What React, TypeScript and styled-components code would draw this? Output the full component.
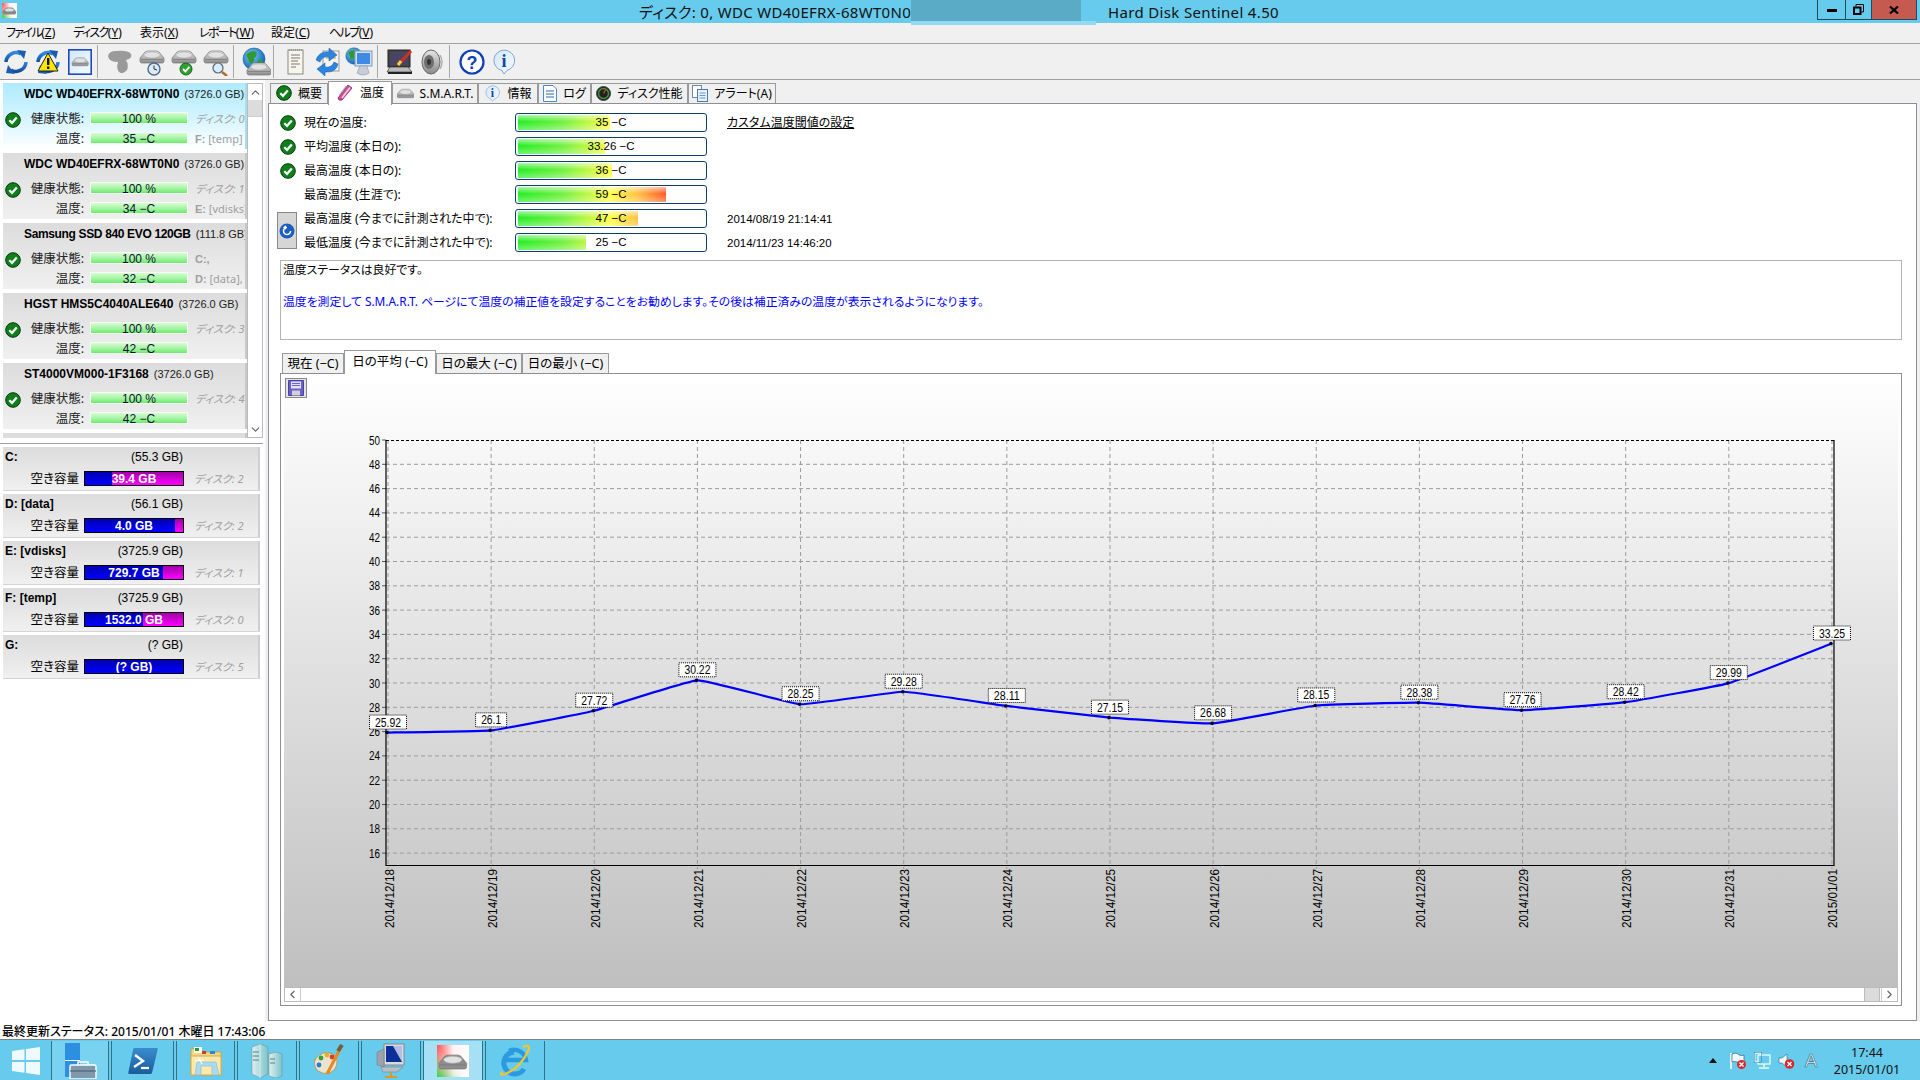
import React from "react";
import styled, { createGlobalStyle } from "styled-components";
import { ChevronUp, ChevronDown, ChevronLeft, ChevronRight } from "lucide-react";

const FONT = `"Noto Sans", "Noto Sans CJK JP", sans-serif`;

const Global = createGlobalStyle`
  html, body { margin: 0; padding: 0; background: #f0f0f0; overflow: hidden; }
  body { font-family: ${FONT}; font-size: 12px; color: #000; font-feature-settings: "palt"; }
  * { box-sizing: border-box; }
`;

const Page = styled.div`
  width: 1920px; height: 1080px; display: flex; flex-direction: column; background: #f0f0f0; position: relative; overflow: hidden;
`;
const HiddenDefs = styled.svg`position: absolute; width: 0; height: 0;`;

/* ---------- title ---------- */
const TitleBar = styled.div`
  height: 23px; flex: none; background: #66cbec; display: flex; align-items: flex-start; position: relative; overflow: visible;
`;
const AppIconBox = styled.div`margin: 3px 0 0 2px; width: 15px; height: 15px; display: flex;`;
const TitleA = styled.div`
  margin-left: 622px; width: 469px; line-height: 25px; font-size: 15px; letter-spacing: .3px; white-space: nowrap; color: #111;
`;
const TitleB = styled.div`
  line-height: 25px; font-size: 15px; letter-spacing: .35px; white-space: nowrap; color: #111;
`;
const BlurTop = styled.div`
  position: absolute; left: 911px; top: 0; width: 170px; height: 21px; background: #5aabc5; z-index: 3;
`;
const BlurBottom = styled.div`
  position: absolute; left: 911px; top: 21px; width: 185px; height: 4px; background: #93d9ef; z-index: 3;
`;
const WinBtns = styled.div`margin-left: auto; margin-right: 3px; display: flex; height: 20px;`;
const WinBtn = styled.div<{ $w: number; $close?: boolean }>`
  width: ${p => p.$w}px; height: 20px; border: 1px solid #1d4a5c; border-top: none; margin-left: -1px;
  display: flex; align-items: center; justify-content: center; background: ${p => (p.$close ? "#c45a50" : "#66cbec")};
`;

/* ---------- menu / toolbar ---------- */
const MenuBar = styled.div`
  height: 21px; flex: none; border-bottom: 1px solid #a0a0a0; display: flex; align-items: center; padding-left: 6px; background: #f0f0f0;
`;
const MenuItem = styled.div<{ $w: number }>`width: ${p => p.$w}px; font-size: 12px; white-space: nowrap; line-height: 20px;`;
const MenuLabel = styled.span<{ $tight?: boolean }>`letter-spacing: ${p => (p.$tight ? "-1.6px" : "0")};`;
const Toolbar = styled.div`
  height: 36px; flex: none; border-bottom: 1px solid #a0a0a0; display: flex; align-items: flex-start; padding-top: 1px; background: #f0f0f0;
`;
const ToolGroup = styled.div<{ $first?: boolean; $last?: boolean }>`
  height: 33px; display: flex; align-items: center; padding: 0 1px 0 ${p => (p.$first ? 0 : 6)}px;
  border-right: ${p => (p.$last ? "none" : "1px solid #a8a8a8")};
`;
const ToolSlot = styled.div`width: 32px; height: 30px; display: flex; align-items: center; justify-content: center;`;

/* ---------- main ---------- */
const Main = styled.div`flex: 1; display: flex; min-height: 0; background: #f0f0f0;`;
const LeftPanel = styled.div`
  width: 265px; flex: none; background: #fff; display: flex; flex-direction: column; padding-top: 3px;
`;
const DiskArea = styled.div`height: 355px; flex: none; display: flex; padding-left: 3px; border-bottom: none;`;
const CardCol = styled.div`width: 244px; flex: none; display: flex; flex-direction: column; gap: 4px; overflow: hidden;`;
const DiskCard = styled.div<{ $sel?: boolean }>`
  height: 66px; flex: none; overflow: hidden; border-right: 2px solid ${p => (p.$sel ? "#a9dcee" : "#c8c8c8")};
  background: ${p => (p.$sel ? "linear-gradient(180deg,#aeeaff 0%,#d6f5ff 55%,#ffffff 100%)" : "linear-gradient(180deg,#dcdcdc 0%,#f0f0f0 100%)")};
`;
const CardTitle = styled.div`height: 22px; padding-left: 21px; display: flex; align-items: center; gap: 5px; white-space: nowrap; font-size: 12px;`;
const Bold = styled.span<{ $sp?: number }>`font-weight: 700; font-family: "Liberation Sans", sans-serif; letter-spacing: ${p => p.$sp ?? 0}px;`;
const Size = styled.span`color: #222; font-family: "Liberation Sans", sans-serif; font-size: 11px;`;
const CardGrid = styled.div`
  display: grid; grid-template-columns: 16px 63px 106px 1fr; grid-template-rows: 12px 12px; row-gap: 8px;
  margin-top: 7px; padding-left: 2px; align-items: center;
`;
const CheckCell = styled.div`display: flex; height: 16px; margin-top: 4px;`;
const RowLabel = styled.div`
  grid-column: 2; text-align: right; white-space: nowrap; font-size: 12.5px; line-height: 12px; padding-top: 2px; color: #222;
`;
const HealthBar = styled.div`
  width: 98px; height: 12px; margin-left: 6px; border: 1px solid #f2fff0;
  background: linear-gradient(180deg,#d8fcd4 0%,#a4f4a4 55%,#6ceb6c 100%);
  font: 12px/13px "Liberation Sans", sans-serif; text-align: center; color: #113; white-space: nowrap;
`;
const SideText = styled.div<{ $italic?: boolean }>`
  margin-left: 5px; white-space: nowrap; color: #a0a0a0; font-size: 11px; line-height: 12px; padding-top: 2px; font-style: ${p => (p.$italic ? "italic" : "normal")};
`;
const DriveSide = styled(SideText)`margin-left: 10px; padding-top: 0;`;
const SideBold = styled.b`font-family: "Liberation Sans", sans-serif;`;

const VScroll = styled.div`width: 16px; flex: none; display: flex; flex-direction: column; background: #fff; border: 1px solid #bbb;`;
const VArrow = styled.div<{ $end?: boolean }>`
  height: 16px; flex: none; display: flex; align-items: center; justify-content: center; color: #606060;
  margin-top: ${p => (p.$end ? "auto" : 0)};
`;
const VThumb = styled.div`height: 17px; flex: none; background: #dcdcdc; border-bottom: 1px solid #ccc;`;

const DriveArea = styled.div`
  margin-top: 5px; border-top: 1px solid #a0a0a0; padding: 3px 3px 0 3px; flex: 1; display: flex; flex-direction: column; gap: 3px;
  background: #fff; margin-right: 2px;
`;
const DriveCard = styled.div`
  height: 44px; flex: none; padding-left: 2px; border-right: 2px solid #cfcfcf; border-bottom: 1px solid #d4d4d4;
  background: linear-gradient(180deg,#dcdcdc 0%,#f0f0f0 100%);
`;
const DriveTop = styled.div`width: 178px; height: 20px; display: flex; align-items: center; justify-content: space-between; font-size: 12px; font-family: "Liberation Sans", sans-serif;`;
const DriveRow = styled.div`display: flex; align-items: center; height: 15px; margin-top: 4px;`;
const DriveLabel = styled.div`width: 74px; text-align: right; font-size: 12.5px; line-height: 15px; white-space: nowrap;`;
const FreeBar = styled.div`
  width: 100px; height: 15px; margin-left: 5px; border: 1px solid #000; position: relative; overflow: hidden;
  background: linear-gradient(180deg,#a000a8 0%,#ff00ff 100%);
`;
const UsedFill = styled.div`height: 100%; background: linear-gradient(180deg,#0000b0 0%,#0000ff 100%);`;
const FreeText = styled.div`
  position: absolute; inset: 0; text-align: center; color: #fff; font: 700 12px/14px "Liberation Sans", sans-serif; white-space: nowrap;
`;

/* ---------- right ---------- */
const RightCol = styled.div`flex: 1; margin: 0 3px 0 3px; padding-top: 3px; display: flex; flex-direction: column; min-width: 0;`;
const TabRow = styled.div`height: 20px; flex: none; display: flex; padding-left: 2px; position: relative; z-index: 2;`;
const TabBtn = styled.div<{ $w: number; $active?: boolean }>`
  width: ${p => p.$w}px; flex: none; height: ${p => (p.$active ? 24 : 20)}px; margin-top: ${p => (p.$active ? -2 : 0)}px;
  background: ${p => (p.$active ? "#fff" : "#f0f0f0")}; border: 1px solid #9a9a9a; border-bottom: none;
  display: flex; align-items: center; justify-content: center; gap: 6px; white-space: nowrap; font-size: 12px;
  padding-bottom: ${p => (p.$active ? 4 : 1)}px;
`;
const TabPanel = styled.div`
  flex: 1; min-height: 0; background: #fff; border: 1px solid #8e8e96; display: flex; flex-direction: column; padding: 9px 0 14px 0;
`;
const TempGrid = styled.div`
  display: grid; grid-template-columns: 27px 211px 192px 1fr; grid-auto-rows: 19px; row-gap: 5px; padding-left: 8px; align-items: center; flex: none;
`;
const TempCheck = styled.div<{ $row: number }>`grid-column: 1; grid-row: ${p => p.$row}; display: flex; margin-left: 3px;`;
const TempLabel = styled.div<{ $row: number }>`grid-column: 2; grid-row: ${p => p.$row}; font-size: 12px; white-space: nowrap; padding-bottom: 1px;`;
const TempBar = styled.div<{ $row: number }>`
  grid-column: 3; grid-row: ${p => p.$row}; height: 19px; border: 1px solid #0b3f6f; border-radius: 3px; padding: 1px 2px; position: relative; background: #fff;
`;
const TempFill = styled.div`
  height: 100%;
  background:
    linear-gradient(180deg, rgba(255,255,255,.6) 0%, rgba(255,255,255,0) 45%, rgba(255,255,255,.35) 100%),
    linear-gradient(90deg,#22ee22 0,#70f040 45px,#ffff40 92px,#ffc040 120px,#ff5020 150px);
  background-size: 100% 100%, 150px 100%;
  background-repeat: no-repeat;
`;
const TempValue = styled.div`
  position: absolute; inset: 0; text-align: center; font: 11.5px/17px "Liberation Sans", sans-serif; white-space: nowrap;
`;
const LinkText = styled.div<{ $row: number }>`
  grid-column: 4; grid-row: ${p => p.$row}; margin-left: 20px; text-decoration: underline; font-size: 12px; white-space: nowrap; padding-bottom: 1px;
`;
const DateText = styled.div<{ $row: number }>`
  grid-column: 4; grid-row: ${p => p.$row}; margin-left: 20px; font: 11.5px "Liberation Sans", sans-serif; white-space: nowrap;
`;
const RewindBtn = styled.div`
  grid-column: 1; grid-row: 5 / span 2; width: 20px; height: 37px; background: #d6d6d6; border: 1px solid #888;
  display: flex; align-items: center; justify-content: center;
`;
const InfoBox = styled.div`
  margin: 8px 14px 0 11px; height: 80px; flex: none; border: 1px solid #b4b4b4; padding: 1px 2px; font-size: 11.85px; line-height: 15px;
`;
const InfoLine = styled.div<{ $blue?: boolean }>`
  height: 16px; margin-bottom: ${p => (p.$blue ? 0 : 16)}px; color: ${p => (p.$blue ? "#0000ff" : "#000")}; white-space: nowrap;
`;
const SubTabRow = styled.div`margin: 11px 0 0 13px; height: 22px; flex: none; display: flex; align-items: flex-end; position: relative; z-index: 2;`;
const SubTab = styled.div<{ $w: number; $active?: boolean }>`
  width: ${p => p.$w}px; height: ${p => (p.$active ? 24 : 20)}px; margin-bottom: ${p => (p.$active ? -1 : 0)}px; flex: none;
  background: ${p => (p.$active ? "#fff" : "#f0f0f0")}; border: 1px solid #9a9a9a; border-bottom: none;
  display: flex; align-items: center; justify-content: center; font-size: 12.5px; white-space: nowrap;
  padding-bottom: ${p => (p.$active ? 4 : 3)}px;
`;
const ChartPanel = styled.div`
  flex: 1; min-height: 0; margin: 0 14px 0 11px; border: 1px solid #8e8e96; background: #fff; padding: 0 3px 3px; display: flex; flex-direction: column;
`;
const Canvas = styled.div`
  flex: 1; min-height: 0; position: relative; background: linear-gradient(180deg,#ffffff 0%,#bfbfbf 100%);
`;
const SaveBtn = styled.div`
  position: absolute; left: 1px; top: 4px; width: 22px; height: 20px; border: 1px solid #888; background: #e4e4e4;
  display: flex; align-items: center; justify-content: center;
`;
const HScroll = styled.div`height: 15px; flex: none; border: 1px solid #bbb; background: #fff; display: flex;`;
const HArrow = styled.div<{ $left?: boolean }>`
  width: 16px; flex: none; display: flex; align-items: center; justify-content: center; color: #606060;
  border-${p => (p.$left ? "right" : "left")}: 1px solid #ccc;
  margin-left: ${p => (p.$left ? 0 : "1px")};
`;
const HThumb = styled.div`width: 16px; flex: none; margin-left: auto; background: #dcdcdc; border-left: 1px solid #bbb; border-right: 1px solid #bbb;`;

/* ---------- bottom ---------- */
const StatusBar = styled.div`
  height: 19px; flex: none; background: #fff; border-bottom: 1px solid #808080; padding-left: 2px; font-size: 12px; line-height: 21px; font-weight: 500; white-space: nowrap;
`;
const Taskbar = styled.div`height: 40px; flex: none; background: #66cbec; display: flex; align-items: stretch; padding-top: 1px;`;
const StartBox = styled.div`width: 51px; flex: none; display: flex; align-items: center; justify-content: center;`;
const TaskItems = styled.div`display: flex; gap: 2px;`;
const TaskBtn = styled.div<{ $w: number; $active?: boolean; $soft?: boolean }>`
  width: ${p => p.$w}px; flex: none; border-left: 1px solid #2f7388; border-right: 1px solid #2f7388;
  background: ${p => (p.$active ? "#a6e0f4" : p.$soft ? "#78d2f0" : "transparent")};
  display: flex; align-items: center; justify-content: center;
`;
const Tray = styled.div`margin-left: auto; display: flex; align-items: center; height: 100%;`;
const TraySlot = styled.div<{ $w: number }>`width: ${p => p.$w}px; display: flex; align-items: center; justify-content: center;`;
const TrayA = styled.div`
  font: 19px "Liberation Sans", sans-serif; color: #eaf8fc; -webkit-text-stroke: 0.6px #34606f; line-height: 20px;
`;
const Clock = styled.div`
  width: 86px; margin-right: 10px; text-align: center; font-size: 12.5px; line-height: 17px; color: #111; white-space: nowrap;
`;

/* ---------- icons ---------- */
const Check = ({ s = 16 }: { s?: number }) => (
  <svg width={s} height={s} viewBox="0 0 16 16">
    <circle cx="8" cy="8" r="7.3" fill="#0f7f1c" stroke="#07350c" strokeWidth="1" />
    <path d="M4.3 8.2 L7 10.8 L11.8 5.4" fill="none" stroke="#fff" strokeWidth="2.2" />
  </svg>
);
const DiskG = ({ t = "", shade = "url(#diskG)" }: { t?: string; shade?: string }) => (
  <g transform={t}>
    <path d="M0 8 L5 2 Q6 1 8 1 H16 Q18 1 19 2 L24 8 V11 Q24 13 22 13 H2 Q0 13 0 11Z" fill={shade} stroke="#7a7a7a" strokeWidth=".7" />
    <ellipse cx="12" cy="5" rx="8" ry="3" fill="#e2e2e2" stroke="#a8a8a8" strokeWidth=".5" />
    <path d="M1 9.5 H23" stroke="#777" strokeWidth=".7" />
  </g>
);
const Arrows = ({ w = 3.6 }: { w?: number }) => (
  <g fill="none" stroke="url(#blueG)" strokeWidth={w}>
    <path d="M4 14 A10 10 0 0 1 19 6" />
    <path d="M24 14 A10 10 0 0 1 9 22" />
    <path d="M15 2 L24 3 L22 11Z" fill="#1a5db0" stroke="none" />
    <path d="M13 26 L4 25 L6 17Z" fill="#1a5db0" stroke="none" />
  </g>
);
const IRefresh = () => (<svg width="28" height="28" viewBox="0 0 28 28"><Arrows /></svg>);
const IWarn = () => (
  <svg width="28" height="28" viewBox="0 0 28 28">
    <Arrows />
    <path d="M14 5 L24 23 H4Z" fill="#ffe600" stroke="#222" strokeWidth="1" />
    <rect x="13" y="10" width="2.4" height="7" fill="#111" />
    <rect x="13" y="18.5" width="2.4" height="2.4" fill="#111" />
  </svg>
);
const IDiskBox = () => (
  <svg width="24" height="26" viewBox="0 0 24 26">
    <rect x=".8" y=".8" width="22.4" height="24.4" fill="url(#paleBlue)" stroke="#1d48c0" strokeWidth="1.6" />
    <g transform="translate(4 8) scale(.68)"><DiskG /></g>
  </svg>
);
const IBlob = () => (
  <svg width="28" height="28" viewBox="0 0 28 28">
    <path d="M2 8 Q3 3 10 3 Q22 2 25 6 Q27 10 20 12 Q23 17 21 22 Q17 27 13 24 Q10 20 12 14 Q3 14 2 8Z" fill="#9a9a9a" />
  </svg>
);
const IDiskClock = () => (
  <svg width="28" height="28" viewBox="0 0 28 28">
    <DiskG t="translate(2 2)" />
    <path d="M14 15 V18" stroke="#2a8a2a" strokeWidth="2" />
    <circle cx="16" cy="21" r="6" fill="#dfe8f5" stroke="#4a6a90" strokeWidth="1.4" />
    <path d="M16 17.5 V21 L19 22" stroke="#234" strokeWidth="1" fill="none" />
  </svg>
);
const IDiskOk = () => (
  <svg width="28" height="28" viewBox="0 0 28 28">
    <DiskG t="translate(2 2)" />
    <path d="M14 15 V18" stroke="#2a8a2a" strokeWidth="2" />
    <circle cx="16" cy="21" r="6" fill="#30a030" stroke="#136a13" strokeWidth="1" />
    <path d="M13 21 L15.4 23.4 L19.4 18.8" stroke="#fff" strokeWidth="1.8" fill="none" />
  </svg>
);
const IDiskSearch = () => (
  <svg width="28" height="28" viewBox="0 0 28 28">
    <DiskG t="translate(2 2)" />
    <circle cx="16" cy="20" r="5" fill="#d8ecff" stroke="#567" strokeWidth="1.2" />
    <path d="M20 24 L25 28" stroke="#b06a20" strokeWidth="2.4" />
  </svg>
);
const Globe = ({ t = "", r = 11 }: { t?: string; r?: number }) => (
  <g transform={t}>
    <circle cx="12" cy="12" r={r} fill="url(#globeG)" stroke="#1b5f9c" strokeWidth=".6" />
    <path d="M6 6 Q10 3 14 5 Q16 9 12 11 Q13 15 9 17 Q6 14 6 11 Q3 9 6 6Z" fill="#2f9a2f" />
    <path d="M16 13 Q20 12 21 15 Q19 19 16 19Z" fill="#2f9a2f" />
  </g>
);
const IGlobeDisk = () => (
  <svg width="30" height="30" viewBox="0 0 30 30">
    <Globe t="translate(1 0)" />
    <DiskG t="translate(6 15)" />
  </svg>
);
const IDoc = () => (
  <svg width="20" height="28" viewBox="0 0 20 28">
    <rect x="2" y="2" width="15" height="24" fill="#f8f6ec" stroke="#8a8a80" />
    <path d="M5 7 H14 M5 10 H14 M5 13 H12 M5 16 H14 M5 19 H10" stroke="#777" strokeWidth="1" />
    <path d="M3 2 H16" stroke="#999" strokeWidth="2" strokeDasharray="1 1" />
  </svg>
);
const ISwap = () => (
  <svg width="28" height="28" viewBox="0 0 28 28">
    <rect x="9" y="3" width="16" height="20" fill="#f4f4f4" stroke="#999" />
    <path d="M12 7 H22 M12 10 H22" stroke="#d89030" />
    <path d="M2 12 Q5 3 15 4 V0 L23 7 L15 13 V9 Q8 8 6 14Z" fill="#2a86e0" stroke="#15569c" strokeWidth=".5" />
    <path d="M24 16 Q22 25 11 24 V28 L3 21 L11 15 V19 Q18 20 20 14Z" fill="#2a86e0" stroke="#15569c" strokeWidth=".5" />
  </svg>
);
const INetMon = () => (
  <svg width="30" height="30" viewBox="0 0 30 30">
    <Globe t="translate(0 0) scale(.75)" />
    <rect x="10" y="4" width="17" height="15" fill="#cfe2f8" stroke="#7f97b6" />
    <rect x="12" y="6" width="13" height="11" fill="#3f8ae4" />
    <path d="M15 19 H22 L24 26 Q18 30 12 26Z" fill="#c6cdd6" stroke="#8895a4" strokeWidth=".6" />
  </svg>
);
const IMonPen = () => (
  <svg width="28" height="28" viewBox="0 0 28 28">
    <rect x="2" y="2" width="22" height="17" fill="#444" stroke="#222" />
    <rect x="4" y="4" width="18" height="13" fill="#4a4464" />
    <path d="M1 24 L4 19 H22 L26 24Z" fill="#bbb" stroke="#333" strokeWidth=".7" />
    <path d="M2 25 H26" stroke="#222" strokeWidth="2" />
    <path d="M12 17 L25 3" stroke="#d03020" strokeWidth="3" />
    <path d="M12 17 L15 13" stroke="#f3d040" strokeWidth="3" />
  </svg>
);
const ISpeaker = () => (
  <svg width="26" height="28" viewBox="0 0 26 28">
    <ellipse cx="12" cy="14" rx="9" ry="12" fill="url(#diskG)" stroke="#666" />
    <ellipse cx="10" cy="14" rx="5" ry="7" fill="#6f6f6f" />
    <ellipse cx="10" cy="14" rx="2" ry="3" fill="#333" />
    <path d="M21 7 Q25 14 21 21" stroke="#aaa" strokeWidth="1.4" fill="none" />
  </svg>
);
const IHelp = () => (
  <svg width="26" height="26" viewBox="0 0 26 26">
    <circle cx="13" cy="13" r="11.5" fill="#fff" stroke="#0d3fb8" strokeWidth="2.2" />
    <text x="13" y="19.5" textAnchor="middle" fontFamily="Liberation Sans" fontWeight="700" fontSize="18" fill="#0d3fb8">?</text>
  </svg>
);
const IInfo = ({ s = 26 }: { s?: number }) => (
  <svg width={s} height={s} viewBox="0 0 26 26">
    <path d="M13 1 A11 10.5 0 0 1 16 21.5 L13 25 L11 21.6 A11 10.5 0 0 1 13 1Z" fill="url(#paleBlue)" stroke="#7ea6d4" />
    <text x="13" y="18" textAnchor="middle" fontFamily="Liberation Serif" fontWeight="700" fontSize="18" fill="#1444a0">i</text>
  </svg>
);
const IPen = () => (
  <svg width="18" height="18" viewBox="0 0 18 18">
    <path d="M2 15 L12 2 L16 5 L6 17 Q2 18 2 15Z" fill="#d84a9a" stroke="#7a2460" strokeWidth=".8" />
    <path d="M6 15 L14 4.5" stroke="#f7d5ea" strokeWidth="1.6" />
    <path d="M3.5 12 L10 3.6" stroke="#a0a0a0" strokeWidth="1.2" />
  </svg>
);
const ISmallDisk = () => (
  <svg width="17" height="11" viewBox="0 0 24 14"><DiskG /></svg>
);
const IDocBlue = () => (
  <svg width="14" height="17" viewBox="0 0 14 17">
    <path d="M.5 .5 H10 L13.5 4 V16.5 H.5Z" fill="#fff" stroke="#4a88c8" />
    <path d="M3 6 H11 M3 9 H11 M3 12 H11" stroke="#2468b8" strokeWidth="1.2" />
  </svg>
);
const IGauge = () => (
  <svg width="15" height="15" viewBox="0 0 15 15">
    <circle cx="7.5" cy="7.5" r="7" fill="#222" stroke="#444" />
    <circle cx="7.5" cy="7.5" r="5" fill="none" stroke="#3a9a3a" strokeWidth="1.4" />
    <path d="M7.5 7.5 L10 3" stroke="#e04030" strokeWidth="1.2" />
  </svg>
);
const IDocs = () => (
  <svg width="16" height="17" viewBox="0 0 16 17">
    <rect x=".5" y=".5" width="9" height="12" fill="#fff" stroke="#6a88a8" />
    <rect x="5.5" y="4.5" width="10" height="12" fill="#e8f0fa" stroke="#4a78a8" />
    <path d="M7.5 8 H13.5 M7.5 10.5 H13.5 M7.5 13 H13.5" stroke="#6a98c8" />
  </svg>
);
const IRewind = () => (
  <svg width="16" height="16" viewBox="0 0 16 16">
    <circle cx="8" cy="8" r="7.5" fill="#1a5ec0" />
    <path d="M11.5 8 A3.5 3.5 0 1 1 8 4.5 H5.5" fill="none" stroke="#fff" strokeWidth="1.6" />
    <path d="M7 2.2 L4 4.5 L7 6.8Z" fill="#fff" />
  </svg>
);
const ISave = () => (
  <svg width="16" height="16" viewBox="0 0 16 16">
    <path d="M.5 .5 H15.5 V15.5 H.5Z" fill="#6a62c8" stroke="#4a42a0" />
    <rect x="3" y="1.5" width="10" height="7" fill="#e4e2f8" />
    <path d="M4 3.5 H12 M4 5.5 H12" stroke="#6a62c8" />
    <rect x="4" y="10.5" width="8" height="5" fill="#d0d0d8" />
  </svg>
);
const IHds = ({ s = 32 }: { s?: number }) => (
  <svg width={s} height={s} viewBox="0 0 32 32">
    <rect width="32" height="32" fill="url(#hdsBg)" />
    <rect width="32" height="32" fill="url(#hdsBg2)" />
    <g transform="translate(2 9) scale(1.15)"><DiskG shade="#8d8d8d" /></g>
  </svg>
);
const IWin = () => (
  <svg width="28" height="28" viewBox="0 0 28 28">
    <path d="M0 4 L12.5 2.2 V13 H0Z M14 2 L28 0 V13 H14Z M0 15 H12.5 V25.8 L0 24Z M14 15 H28 V28 L14 26Z" fill="#eefaff" />
  </svg>
);
const IServerMgr = () => (
  <svg width="33" height="36" viewBox="0 0 33 36">
    <rect x="1" y="0" width="15" height="17" fill="#2c8fe0" />
    <rect x="1" y="18" width="15" height="16" fill="#2c8fe0" />
    <path d="M1 17.5 H16" stroke="#fff" />
    <rect x="6" y="22" width="26" height="14" rx="1.5" fill="#7f99aa" stroke="#fff" strokeWidth="1.4" />
    <path d="M14 22 V19 H24 V22" fill="none" stroke="#fff" strokeWidth="1.4" />
    <path d="M6 28 H32" stroke="#44596a" />
  </svg>
);
const IPowerShell = () => (
  <svg width="30" height="28" viewBox="0 0 30 28">
    <path d="M6 1 H29 Q30 1 29.6 3 L24 26 Q23.5 27 22 27 H1 Q0 27 .4 25 L5 3 Q5.4 1 6 1Z" fill="url(#psG)" />
    <path d="M7 8 L15 14 L6 20" fill="none" stroke="#fff" strokeWidth="2.4" />
    <path d="M13 21 H21" stroke="#fff" strokeWidth="2.2" />
  </svg>
);
const IFolder = () => (
  <svg width="32" height="32" viewBox="0 0 32 32">
    <path d="M1 4 H11 L13 7 H31 V30 H1Z" fill="#f3d680" stroke="#c9a548" />
    <path d="M4 2 H12 V8 H4Z" fill="#fff" />
    <rect x="5" y="3" width="4" height="3" fill="#2c9a2c" />
    <rect x="12" y="6" width="4" height="3" fill="#d03a2a" />
    <rect x="20" y="6" width="5" height="3" fill="#2a86d8" />
    <path d="M1 11 H31 V30 H1Z" fill="#fbe8aa" stroke="#d0ac52" />
    <path d="M7 17 H26 L29 30 H22 V21 H11 V30 H5Z" fill="#a8dcf0" stroke="#8ab8d0" strokeWidth=".6" />
    <path d="M8 12 L12 19 M5 16 L14 15" stroke="#fff" strokeWidth="1.2" />
  </svg>
);
const IServers = () => (
  <svg width="32" height="34" viewBox="0 0 32 34">
    <path d="M1 3 L9 0 L17 3 V30 L9 34 L1 30Z" fill="url(#tealG)" stroke="#6a8e94" strokeWidth=".5" />
    <path d="M9 0 V34" stroke="#dff" strokeWidth=".6" />
    <path d="M18 10 L25 8 L31 10 V32 L25 34 L18 32Z" fill="url(#tealG)" stroke="#6a8e94" strokeWidth=".5" />
    <path d="M2 8 H8 M2 12 H8 M2 16 H8 M19 15 H24 M19 19 H24" stroke="#5e7e86" />
  </svg>
);
const IPalette = () => (
  <svg width="32" height="34" viewBox="0 0 32 34">
    <path d="M3 14 Q10 6 20 10 Q27 16 22 25 Q14 33 5 27 Q-1 21 3 14Z" fill="#e9e3cf" stroke="#a99c70" />
    <circle cx="8" cy="14" r="2.4" fill="#3aa03a" />
    <circle cx="14" cy="11" r="2.4" fill="#e8b020" />
    <circle cx="6" cy="21" r="2.4" fill="#2a7ad0" />
    <circle cx="19" cy="13" r="2.4" fill="#d04030" />
    <path d="M14 30 L27 5" stroke="#e88a20" strokeWidth="3" />
    <path d="M25 7 L29 1" stroke="#7a5a3a" strokeWidth="4" />
  </svg>
);
const IMonNet = () => (
  <svg width="32" height="36" viewBox="0 0 32 36">
    <rect x="9" y="1" width="20" height="21" fill="#d6dbe2" stroke="#888" />
    <rect x="11" y="3" width="16" height="16" fill="#0d2f98" />
    <path d="M18 3 H27 V19Z" fill="#eef" opacity=".75" />
    <path d="M2 9 L9 6 V24 L2 22Z" fill="#9aa2ad" stroke="#777" strokeWidth=".5" />
    <path d="M6 24 H28 L22 29 H8Z" fill="#b8bec6" stroke="#777" strokeWidth=".5" />
    <path d="M16 29 V33 M10 34 H22" stroke="#d89a20" strokeWidth="2" />
  </svg>
);
const IIE = () => (
  <svg width="32" height="34" viewBox="0 0 32 34">
    <path d="M15 8 A11 11 0 1 0 25 25" fill="none" stroke="#2a9be0" strokeWidth="5" />
    <path d="M7 16 H27 A12 12 0 0 0 10 7" fill="none" stroke="#2a9be0" strokeWidth="4.4" />
    <path d="M3 28 Q0 32 6 30 Q22 24 30 5 Q31 0 24 3" fill="none" stroke="#f4c430" strokeWidth="2.2" />
  </svg>
);
const IFlagX = () => (
  <svg width="18" height="18" viewBox="0 0 18 18">
    <path d="M2 1 V17" stroke="#fff" strokeWidth="1.6" />
    <path d="M3 2 Q8 0 10 3 Q13 4 15 3 V11 Q10 12 8 10 Q5 9 3 10Z" fill="#eafaff" stroke="#3a6474" strokeWidth=".7" />
    <circle cx="12.5" cy="12.5" r="4.5" fill="#d8282c" />
    <path d="M10.5 10.5 L14.5 14.5 M14.5 10.5 L10.5 14.5" stroke="#fff" strokeWidth="1.4" />
  </svg>
);
const INetTray = () => (
  <svg width="17" height="18" viewBox="0 0 17 18">
    <rect x=".8" y="1" width="6" height="9" rx="1" fill="#66cbec" stroke="#eafaff" strokeWidth="1.3" />
    <rect x="4" y="3" width="12" height="9" fill="#66cbec" stroke="#eafaff" strokeWidth="1.3" />
    <path d="M10 12 V15 M5 16 H15" stroke="#eafaff" strokeWidth="1.5" />
    <rect x=".2" y=".4" width="7.2" height="10.2" fill="none" stroke="#2f5c6c" strokeWidth=".4" />
  </svg>
);
const ISpkTray = () => (
  <svg width="17" height="18" viewBox="0 0 17 18">
    <path d="M1 6 H4 L9 2 V15 L4 11 H1Z" fill="#eafaff" stroke="#3a6474" strokeWidth=".6" />
    <circle cx="11.5" cy="12" r="4.8" fill="#d8282c" />
    <path d="M9.5 10 L13.5 14 M13.5 10 L9.5 14" stroke="#fff" strokeWidth="1.4" />
  </svg>
);

/* ---------- chart ---------- */
const X0 = 388;
const DX = 103.14;
const yOf = (t: number) => 440 + (50 - t) * 12.15;
const VALUES = [25.92, 26.1, 27.72, 30.22, 28.25, 29.28, 28.11, 27.15, 26.68, 28.15, 28.38, 27.76, 28.42, 29.99, 33.25];
const DATES = ["2014/12/18","2014/12/19","2014/12/20","2014/12/21","2014/12/22","2014/12/23","2014/12/24","2014/12/25","2014/12/26","2014/12/27","2014/12/28","2014/12/29","2014/12/30","2014/12/31","2015/01/01"];
const TICKS = Array.from({ length: 18 }, (_, i) => 50 - i * 2);

const linePath = () => {
  const p = VALUES.map((v, i) => [X0 + i * DX, yOf(v)]);
  let d = `M${p[0][0]} ${p[0][1]}`;
  for (let i = 0; i < p.length - 1; i++) {
    const a = p[Math.max(0, i - 1)], b = p[i], c = p[i + 1], e = p[Math.min(p.length - 1, i + 2)];
    const k = 0.05;
    d += ` C${b[0] + (c[0] - a[0]) * k} ${b[1] + (c[1] - a[1]) * k} ${c[0] - (e[0] - b[0]) * k} ${c[1] - (e[1] - b[1]) * k} ${c[0]} ${c[1]}`;
  }
  return d;
};

const ChartSvg = styled.svg`position: absolute; left: 0; top: 0; width: 1614px; height: 615px; display: block;`;

const Chart = () => (
  <ChartSvg viewBox="284 374 1614 615">
    <g fontFamily="Liberation Sans" fontSize="12" fill="#000">
      {TICKS.map(t => (
        <g key={t}>
          {t !== 50 && <line x1="386" x2="1834" y1={yOf(t)} y2={yOf(t)} stroke="#9c9c9c" strokeDasharray="4 3" />}
          <line x1="382" x2="386" y1={yOf(t)} y2={yOf(t)} stroke="#555" />
          <text x="369" y={yOf(t) + 4.5} textLength="11" lengthAdjust="spacingAndGlyphs">{t}</text>
        </g>
      ))}
      {DATES.map((d, i) => {
        const x = X0 + i * DX;
        return (
          <g key={d}>
            <line x1={x} x2={x} y1="440" y2="869" stroke="#9c9c9c" strokeDasharray="4 3" />
            <text transform={`translate(${x + 5.5} 869) rotate(-90)`} textAnchor="end" textLength="59" lengthAdjust="spacingAndGlyphs">{d}</text>
          </g>
        );
      })}
      <line x1="386" x2="1834" y1="440.5" y2="440.5" stroke="#000" strokeDasharray="3 2" />
      <path d="M386 440 V865.5 H1834 V440" fill="none" stroke="#000" strokeWidth="1.2" />
      <path d={linePath()} fill="none" stroke="#0000ff" strokeWidth="2.2" />
      {VALUES.map((v, i) => {
        const x = X0 + i * DX;
        const y = yOf(v);
        const label = String(v);
        const w = label.length >= 5 ? 37 : 31;
        return (
          <g key={i}>
            <circle cx={x - 1} cy={y} r="1.8" fill="#000030" />
            <rect x={x - w / 2} y={y - 17.5} width={w} height={14} fill="#fff" stroke="#000" strokeDasharray="1 1" />
            <text x={x} y={y - 6} textAnchor="middle" textLength={w - 11} lengthAdjust="spacingAndGlyphs">{label}</text>
          </g>
        );
      })}
    </g>
  </ChartSvg>
);

/* ---------- data ---------- */
const DISKS = [
  { name: "WDC WD40EFRX-68WT0N0", size: "(3726.0 GB)", temp: "35 −C", side1: "ディスク: 0", b: "F:", rest: " [temp]", sel: true },
  { name: "WDC WD40EFRX-68WT0N0", size: "(3726.0 GB)", temp: "34 −C", side1: "ディスク: 1", b: "E:", rest: " [vdisks]" },
  { name: "Samsung SSD 840 EVO 120GB", size: "(111.8 GB)", temp: "32 −C", b0: "C:,", b: "D:", rest: " [data],", sp: -0.35 },
  { name: "HGST HMS5C4040ALE640", size: "(3726.0 GB)", temp: "42 −C", side1: "ディスク: 3" },
  { name: "ST4000VM000-1F3168", size: "(3726.0 GB)", temp: "42 −C", side1: "ディスク: 4" },
];
const DRIVES = [
  { name: "C:", size: "(55.3 GB)", free: "39.4 GB", used: 28, disk: "ディスク: 2" },
  { name: "D: [data]", size: "(56.1 GB)", free: "4.0 GB", used: 92, disk: "ディスク: 2" },
  { name: "E: [vdisks]", size: "(3725.9 GB)", free: "729.7 GB", used: 80, disk: "ディスク: 1" },
  { name: "F: [temp]", size: "(3725.9 GB)", free: "1532.0 GB", used: 59, disk: "ディスク: 0" },
  { name: "G:", size: "(? GB)", free: "(? GB)", used: 100, disk: "ディスク: 5" },
];
const TEMPS = [
  { label: "現在の温度:", v: "35 −C", w: 92, ok: true },
  { label: "平均温度 (本日の):", v: "33.26 −C", w: 87, ok: true },
  { label: "最高温度 (本日の):", v: "36 −C", w: 94, ok: true },
  { label: "最高温度 (生涯で):", v: "59 −C", w: 148 },
  { label: "最高温度 (今までに計測された中で):", v: "47 −C", w: 120, date: "2014/08/19 21:14:41" },
  { label: "最低温度 (今までに計測された中で):", v: "25 −C", w: 68, date: "2014/11/23 14:46:20" },
];
const Accel = ({ t, k, tight }: { t: string; k: string; tight?: boolean }) => (
  <><MenuLabel $tight={tight}>{t}</MenuLabel>(<u>{k}</u>)</>
);

export default function App() {
  return (
    <Page>
      <Global />
      <HiddenDefs>
        <defs>
          <linearGradient id="diskG" x1="0" y1="0" x2="0" y2="1"><stop offset="0" stopColor="#e6e6e6" /><stop offset="1" stopColor="#8a8a8a" /></linearGradient>
          <linearGradient id="blueG" x1="0" y1="0" x2="0" y2="1"><stop offset="0" stopColor="#2f8ae0" /><stop offset="1" stopColor="#154f9c" /></linearGradient>
          <linearGradient id="paleBlue" x1="0" y1="0" x2="1" y2="1"><stop offset="0" stopColor="#d0e8fb" /><stop offset="1" stopColor="#f6fbff" /></linearGradient>
          <radialGradient id="globeG" cx=".4" cy=".35" r=".7"><stop offset="0" stopColor="#7ac8f4" /><stop offset="1" stopColor="#0b5cb0" /></radialGradient>
          <linearGradient id="hdsBg" x1="0" y1="0" x2="1" y2="0"><stop offset="0" stopColor="#ff5050" /><stop offset=".5" stopColor="#fff0f0" /><stop offset="1" stopColor="#ffffff" /></linearGradient>
          <linearGradient id="hdsBg2" x1="0" y1="1" x2="1" y2="0"><stop offset="0" stopColor="#20e040" /><stop offset=".5" stopColor="#ffffff" stopOpacity="0" /></linearGradient>
          <linearGradient id="psG" x1="0" y1="0" x2="0" y2="1"><stop offset="0" stopColor="#3a8cd0" /><stop offset="1" stopColor="#1a5c9c" /></linearGradient>
          <linearGradient id="tealG" x1="0" y1="0" x2="1" y2="0"><stop offset="0" stopColor="#dfeff0" /><stop offset="1" stopColor="#7cc4c8" /></linearGradient>
        </defs>
      </HiddenDefs>

      <TitleBar>
        <AppIconBox><IHds s={15} /></AppIconBox>
        <TitleA>ディスク: 0, WDC WD40EFRX-68WT0N0</TitleA>
        <TitleB>Hard Disk Sentinel 4.50</TitleB>
        <BlurTop />
        <BlurBottom />
        <WinBtns>
          <WinBtn $w={29}>
            <svg width="10" height="4" viewBox="0 0 10 4"><rect width="10" height="3" y="1" fill="#000" /></svg>
          </WinBtn>
          <WinBtn $w={27}>
            <svg width="11" height="11" viewBox="0 0 11 11">
              <path d="M3 2.5 V.5 H10.5 V8 H8.5" fill="none" stroke="#000" />
              <rect x="1" y="3.5" width="6.5" height="6.5" fill="none" stroke="#000" strokeWidth="2" />
            </svg>
          </WinBtn>
          <WinBtn $w={46} $close>
            <svg width="10" height="8" viewBox="0 0 10 8"><path d="M1 .5 L9 7.5 M9 .5 L1 7.5" stroke="#000" strokeWidth="2.2" /></svg>
          </WinBtn>
        </WinBtns>
      </TitleBar>

      <MenuBar>
        <MenuItem $w={67}><Accel t="ファイル" k="Z" tight /></MenuItem>
        <MenuItem $w={67}><Accel t="ディスク" k="Y" tight /></MenuItem>
        <MenuItem $w={59}><Accel t="表示" k="X" /></MenuItem>
        <MenuItem $w={72}><Accel t="レポート" k="W" tight /></MenuItem>
        <MenuItem $w={58}><Accel t="設定" k="C" /></MenuItem>
        <MenuItem $w={60}><Accel t="ヘルプ" k="V" tight /></MenuItem>
      </MenuBar>

      <Toolbar>
        <ToolGroup $first>
          <ToolSlot><IRefresh /></ToolSlot>
          <ToolSlot><IWarn /></ToolSlot>
          <ToolSlot><IDiskBox /></ToolSlot>
        </ToolGroup>
        <ToolGroup>
          <ToolSlot><IBlob /></ToolSlot>
          <ToolSlot><IDiskClock /></ToolSlot>
          <ToolSlot><IDiskOk /></ToolSlot>
          <ToolSlot><IDiskSearch /></ToolSlot>
        </ToolGroup>
        <ToolGroup><ToolSlot><IGlobeDisk /></ToolSlot></ToolGroup>
        <ToolGroup>
          <ToolSlot><IDoc /></ToolSlot>
          <ToolSlot><ISwap /></ToolSlot>
          <ToolSlot><INetMon /></ToolSlot>
        </ToolGroup>
        <ToolGroup>
          <ToolSlot><IMonPen /></ToolSlot>
          <ToolSlot><ISpeaker /></ToolSlot>
        </ToolGroup>
        <ToolGroup $last>
          <ToolSlot><IHelp /></ToolSlot>
          <ToolSlot><IInfo /></ToolSlot>
        </ToolGroup>
      </Toolbar>

      <Main>
        <LeftPanel>
          <DiskArea>
            <CardCol>
              {DISKS.map((d, i) => (
                <DiskCard key={i} $sel={d.sel}>
                  <CardTitle><Bold $sp={d.sp}>{d.name}</Bold><Size>{d.size}</Size></CardTitle>
                  <CardGrid>
                    <CheckCell><Check /></CheckCell>
                    <RowLabel>健康状態:</RowLabel>
                    <HealthBar>100 %</HealthBar>
                    <SideText $italic={!!d.side1}>{d.side1 ?? <SideBold>{d.b0}</SideBold>}</SideText>
                    <div />
                    <RowLabel>温度:</RowLabel>
                    <HealthBar>{d.temp}</HealthBar>
                    <SideText>{d.b && <SideBold>{d.b}</SideBold>}{d.rest}</SideText>
                  </CardGrid>
                </DiskCard>
              ))}
              <DiskCard />
            </CardCol>
            <VScroll>
              <VArrow><ChevronUp size={13} /></VArrow>
              <VThumb />
              <VArrow $end><ChevronDown size={13} /></VArrow>
            </VScroll>
          </DiskArea>
          <DriveArea>
            {DRIVES.map((d, i) => (
              <DriveCard key={i}>
                <DriveTop><b>{d.name}</b><span>{d.size}</span></DriveTop>
                <DriveRow>
                  <DriveLabel>空き容量</DriveLabel>
                  <FreeBar>
                    <UsedFill style={{ width: `${d.used}%` }} />
                    <FreeText>{d.free}</FreeText>
                  </FreeBar>
                  <DriveSide $italic>{d.disk}</DriveSide>
                </DriveRow>
              </DriveCard>
            ))}
          </DriveArea>
        </LeftPanel>

        <RightCol>
          <TabRow>
            <TabBtn $w={58}><Check /><span>概要</span></TabBtn>
            <TabBtn $w={64} $active><IPen /><span>温度</span></TabBtn>
            <TabBtn $w={86}><ISmallDisk /><span>S.M.A.R.T.</span></TabBtn>
            <TabBtn $w={60}><IInfo s={17} /><span>情報</span></TabBtn>
            <TabBtn $w={53}><IDocBlue /><span>ログ</span></TabBtn>
            <TabBtn $w={97}><IGauge /><span>ディスク性能</span></TabBtn>
            <TabBtn $w={88}><IDocs /><span>アラート(A)</span></TabBtn>
          </TabRow>
          <TabPanel>
            <TempGrid>
              {TEMPS.map((t, i) => (
                <React.Fragment key={i}>
                  {t.ok && <TempCheck $row={i + 1}><Check /></TempCheck>}
                  <TempLabel $row={i + 1}>{t.label}</TempLabel>
                  <TempBar $row={i + 1}>
                    <TempFill style={{ width: t.w }} />
                    <TempValue>{t.v}</TempValue>
                  </TempBar>
                  {t.date && <DateText $row={i + 1}>{t.date}</DateText>}
                </React.Fragment>
              ))}
              <LinkText $row={1}>カスタム温度閾値の設定</LinkText>
              <RewindBtn><IRewind /></RewindBtn>
            </TempGrid>
            <InfoBox>
              <InfoLine>温度ステータスは良好です。</InfoLine>
              <InfoLine $blue>温度を測定して S.M.A.R.T. ページにて温度の補正値を設定することをお勧めします。その後は補正済みの温度が表示されるようになります。</InfoLine>
            </InfoBox>
            <SubTabRow>
              <SubTab $w={62}>現在 (−C)</SubTab>
              <SubTab $w={92} $active>日の平均 (−C)</SubTab>
              <SubTab $w={86}>日の最大 (−C)</SubTab>
              <SubTab $w={87}>日の最小 (−C)</SubTab>
            </SubTabRow>
            <ChartPanel>
              <Canvas>
                <Chart />
                <SaveBtn><ISave /></SaveBtn>
              </Canvas>
              <HScroll>
                <HArrow $left><ChevronLeft size={13} /></HArrow>
                <HThumb />
                <HArrow><ChevronRight size={13} /></HArrow>
              </HScroll>
            </ChartPanel>
          </TabPanel>
        </RightCol>
      </Main>

      <StatusBar>最終更新ステータス: 2015/01/01 木曜日 17:43:06</StatusBar>

      <Taskbar>
        <StartBox><IWin /></StartBox>
        <TaskItems>
          <TaskBtn $w={58} $soft><IServerMgr /></TaskBtn>
          <TaskBtn $w={63}><IPowerShell /></TaskBtn>
          <TaskBtn $w={59}><IFolder /></TaskBtn>
          <TaskBtn $w={60}><IServers /></TaskBtn>
          <TaskBtn $w={60}><IPalette /></TaskBtn>
          <TaskBtn $w={60}><IMonNet /></TaskBtn>
          <TaskBtn $w={60} $active><IHds /></TaskBtn>
          <TaskBtn $w={60}><IIE /></TaskBtn>
        </TaskItems>
        <Tray>
          <TraySlot $w={26}>
            <svg width="8" height="5" viewBox="0 0 8 5"><path d="M0 5 L4 0 L8 5Z" fill="#111" /></svg>
          </TraySlot>
          <TraySlot $w={24}><IFlagX /></TraySlot>
          <TraySlot $w={24}><INetTray /></TraySlot>
          <TraySlot $w={24}><ISpkTray /></TraySlot>
          <TraySlot $w={26}><TrayA>A</TrayA></TraySlot>
          <Clock>17:44<br />2015/01/01</Clock>
        </Tray>
      </Taskbar>
    </Page>
  );
}
